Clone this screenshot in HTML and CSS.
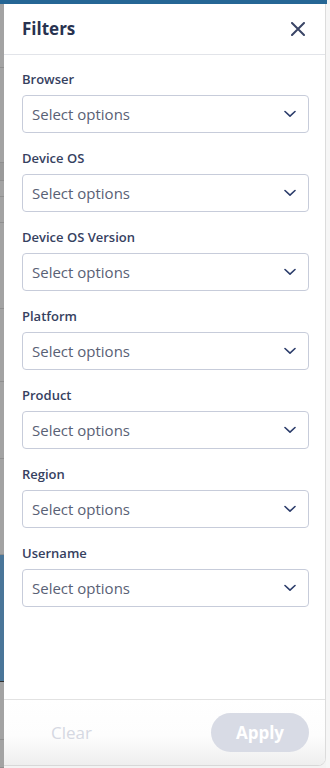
FILE: index.html
```html
<!DOCTYPE html>
<html lang="en">
<head>
<meta charset="utf-8">
<title>Filters</title>
<link rel="stylesheet" href="styles.css">
</head>
<body>
<div class="topbar"></div>
<div class="frame">
  <div class="backdrop">
    <div class="bd-seg" style="height:64px"></div>
    <div class="bd-seg" style="height:95px"></div>
    <div class="bd-seg dark" style="height:18px"></div>
    <div class="bd-seg" style="height:16px"></div>
    <div class="bd-seg" style="height:26px"></div>
    <div class="bd-seg" style="height:86px"></div>
    <div class="bd-seg" style="height:73px"></div>
    <div class="bd-seg" style="height:77px"></div>
    <div class="bd-seg" style="height:96px"></div>
    <div class="bd-seg blue" style="height:127px"></div>
    <div class="bd-seg" style="height:58px"></div>
    <div class="bd-seg" style="height:28px"></div>
  </div>
  <aside class="panel">
    <header class="panel-header">
      <h1 class="title">Filters</h1>
      <button class="close" aria-label="Close">
        <svg width="14" height="14" viewBox="0 0 14 14"><path d="M1 1 L13 13 M13 1 L1 13" stroke="#3a4566" stroke-width="2" fill="none" stroke-linecap="round"/></svg>
      </button>
    </header>
    <div class="panel-body">
      <div class="field">
        <label class="label">Browser</label>
        <div class="select"><span>Select options</span><svg class="chev" width="12" height="8" viewBox="0 0 12 8"><path d="M1 1.5 L6 6.2 L11 1.5" stroke="#2c3d6b" stroke-width="1.6" fill="none" stroke-linecap="round" stroke-linejoin="round"/></svg></div>
      </div>
      <div class="field">
        <label class="label">Device OS</label>
        <div class="select"><span>Select options</span><svg class="chev" width="12" height="8" viewBox="0 0 12 8"><path d="M1 1.5 L6 6.2 L11 1.5" stroke="#2c3d6b" stroke-width="1.6" fill="none" stroke-linecap="round" stroke-linejoin="round"/></svg></div>
      </div>
      <div class="field">
        <label class="label">Device OS Version</label>
        <div class="select"><span>Select options</span><svg class="chev" width="12" height="8" viewBox="0 0 12 8"><path d="M1 1.5 L6 6.2 L11 1.5" stroke="#2c3d6b" stroke-width="1.6" fill="none" stroke-linecap="round" stroke-linejoin="round"/></svg></div>
      </div>
      <div class="field">
        <label class="label">Platform</label>
        <div class="select"><span>Select options</span><svg class="chev" width="12" height="8" viewBox="0 0 12 8"><path d="M1 1.5 L6 6.2 L11 1.5" stroke="#2c3d6b" stroke-width="1.6" fill="none" stroke-linecap="round" stroke-linejoin="round"/></svg></div>
      </div>
      <div class="field">
        <label class="label">Product</label>
        <div class="select"><span>Select options</span><svg class="chev" width="12" height="8" viewBox="0 0 12 8"><path d="M1 1.5 L6 6.2 L11 1.5" stroke="#2c3d6b" stroke-width="1.6" fill="none" stroke-linecap="round" stroke-linejoin="round"/></svg></div>
      </div>
      <div class="field">
        <label class="label">Region</label>
        <div class="select"><span>Select options</span><svg class="chev" width="12" height="8" viewBox="0 0 12 8"><path d="M1 1.5 L6 6.2 L11 1.5" stroke="#2c3d6b" stroke-width="1.6" fill="none" stroke-linecap="round" stroke-linejoin="round"/></svg></div>
      </div>
      <div class="field">
        <label class="label">Username</label>
        <div class="select"><span>Select options</span><svg class="chev" width="12" height="8" viewBox="0 0 12 8"><path d="M1 1.5 L6 6.2 L11 1.5" stroke="#2c3d6b" stroke-width="1.6" fill="none" stroke-linecap="round" stroke-linejoin="round"/></svg></div>
      </div>
    </div>
    <footer class="panel-footer">
      <button class="btn-clear">Clear</button>
      <button class="btn-apply">Apply</button>
    </footer>
  </aside>
  <div class="edge"></div>
</div>
</body>
</html>
```

FILE: styles.css
```css
* { box-sizing: border-box; }
html, body { margin: 0; padding: 0; }
body {
  width: 330px;
  height: 768px;
  overflow: hidden;
  background: #f3f3f3;
  font-family: "Open Sans", "Noto Sans", sans-serif;
}
.topbar {
  height: 4px;
  width: 327px;
  background: #256695;
}
.frame {
  display: flex;
  height: 764px;
}
.backdrop {
  width: 4px;
  display: flex;
  flex-direction: column;
}
.bd-seg {
  background: #a3a3a3;
  border-bottom: 1px solid #8f8f8f;
}
.bd-seg.dark { background: #9a9a9a; }
.bd-seg.blue { background: #4a7699; border-bottom: 1px solid #333; }
.panel {
  width: 322px;
  height: 762px;
  background: #fff;
  border-right: 1px solid #dcdcdc;
  border-bottom: 1px solid #d8d8d8;
  border-bottom-right-radius: 8px;
  display: flex;
  flex-direction: column;
  overflow: hidden;
}
.edge {
  flex: 1;
  background: #f6f6f6;
}
.panel-header {
  height: 51px;
  border-bottom: 1px solid #e2e4e9;
  display: flex;
  align-items: center;
  justify-content: space-between;
  padding: 0 20px 0 18px;
}
.title {
  margin: 0;
  font-size: 17px;
  font-weight: 700;
  color: #283350;
  line-height: 22px;
}
.close {
  border: 0;
  background: none;
  padding: 0;
  width: 14px;
  height: 14px;
  display: flex;
}
.panel-body {
  flex: 1;
  padding: 16px 16px 0 18px;
  display: flex;
  flex-direction: column;
  gap: 17px;
}
.field {
  display: flex;
  flex-direction: column;
  gap: 8px;
}
.label {
  font-size: 13px;
  font-weight: 600;
  line-height: 16px;
  color: #36415f;
}
.select {
  height: 38px;
  border: 1px solid #c7ccda;
  border-radius: 4px;
  display: flex;
  align-items: center;
  justify-content: space-between;
  padding: 0 12px 0 9px;
  font-size: 15px;
  color: #596175;
}
.chev { display: block; }
.panel-footer {
  height: 66px;
  border-top: 1px solid #e2e2e2;
  background: linear-gradient(#ffffff 0%, #fdfdfd 55%, #eeeeee 100%);
  display: flex;
  align-items: flex-start;
  justify-content: space-between;
  padding: 13px 16px 0 18px;
}
.btn-clear {
  border: 0;
  background: none;
  font-family: inherit;
  font-size: 17px;
  color: #d5d8e2;
  height: 39px;
  padding: 0 0 0 29px;
}
.btn-apply {
  border: 0;
  width: 98px;
  height: 39px;
  border-radius: 20px;
  background: #d8dbe5;
  color: #fff;
  font-family: inherit;
  font-size: 17px;
  font-weight: 700;
}
```
